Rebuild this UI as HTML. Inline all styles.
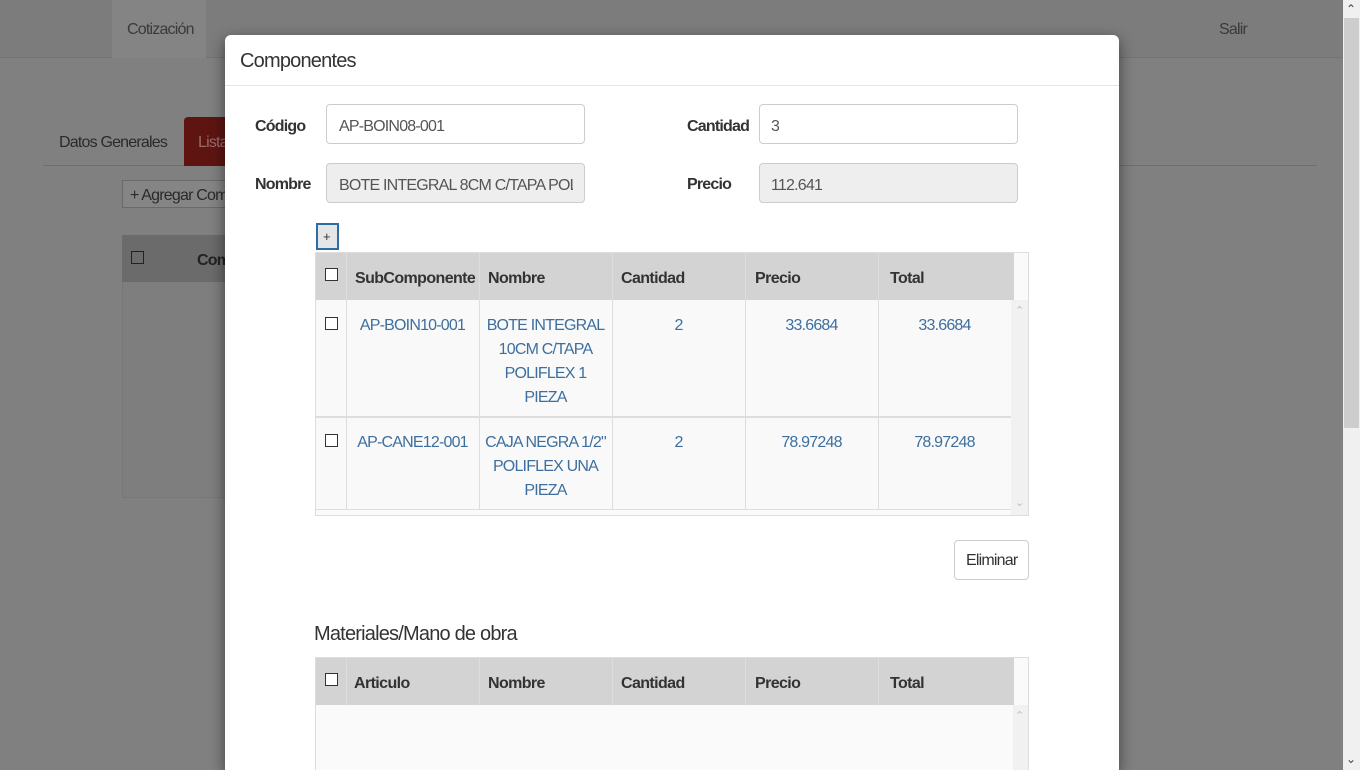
<!DOCTYPE html>
<html style="overflow:hidden;height:770px"><head><meta charset="utf-8"><style>
*{box-sizing:border-box;margin:0;padding:0}
html,body{overflow:hidden}
body{width:1360px;height:770px;background:#808080;font-family:"Liberation Sans",sans-serif;position:relative;color:#333}
.a{position:absolute}
.t{position:absolute;white-space:nowrap;letter-spacing:-0.8px;margin-top:2px}
.b{font-weight:bold}
.cb{position:absolute;width:13px;height:13px;border:1px solid #333;background:#fff}
.lnk{color:#3d6f9e;font-size:16px;letter-spacing:-0.8px;text-align:center;line-height:24px;position:absolute;margin-top:2px}
.th{position:absolute;font-weight:bold;font-size:16px;color:#333;letter-spacing:-0.6px;margin-top:2px}
.vl{position:absolute;width:1px;background:#ddd}
</style></head><body>
<!-- navbar -->
<div class="a" style="left:0;top:0;width:1343px;height:58px;background:#7c7c7c;border-bottom:1px solid #747474"></div>
<div class="a" style="left:112px;top:0;width:94px;height:58px;background:#848484"></div>
<div class="t" style="left:127px;top:19px;font-size:16px;color:#3a3a3a">Cotización</div>
<div class="t" style="left:1219px;top:19px;font-size:16px;color:#3a3a3a">Salir</div>
<!-- background page -->
<div class="a" style="left:43px;top:165px;width:1274px;height:1px;background:#6e6e6e"></div>
<div class="t" style="left:59px;top:132px;font-size:16px;color:#2a2a2a">Datos Generales</div>
<div class="a" style="left:184px;top:117px;width:45px;height:49px;background:#5e1512;border-radius:4px 4px 0 0"></div>
<div class="t" style="left:198px;top:132px;font-size:16px;color:#9b6a68">Lista</div>
<div class="a" style="left:122px;top:180px;width:110px;height:28px;background:#858585;border:1px solid #6a6a6a"></div>
<div class="t" style="left:130px;top:185px;font-size:16px;color:#2a2a2a">+ Agregar Com</div>
<div class="a" style="left:122px;top:235px;width:110px;height:263px;border:1px solid #777;background:#7e7e7e"></div>
<div class="a" style="left:122px;top:235px;width:110px;height:47px;background:#6b6b6b"></div>
<div class="a" style="left:131px;top:251px;width:13px;height:13px;border:1px solid #222"></div>
<div class="t b" style="left:197px;top:250px;font-size:16px;color:#222">Com</div>
<!-- page scrollbar -->
<div class="a" style="left:1343px;top:0;width:17px;height:770px;background:#f0f0f0"></div>
<div class="a" style="left:1344px;top:18px;width:15px;height:410px;background:#cdcdcd"></div>
<div class="t" style="left:1346px;top:0px;font-size:12px;color:#444">&#8963;</div>
<div class="t" style="left:1346px;top:750px;font-size:12px;color:#444">&#8964;</div>
<!-- modal -->
<div class="a" style="left:225px;top:35px;width:894px;height:735px;background:#fff;border-radius:6px 6px 0 0;box-shadow:0 5px 15px rgba(0,0,0,.5)"></div>
<div class="a" style="left:225px;top:85px;width:894px;height:1px;background:#e5e5e5"></div>
<div class="t" style="left:240px;top:48px;font-size:20px;color:#333;letter-spacing:-0.8px">Componentes</div>
<div class="t b" style="left:255px;top:116px;font-size:16px">Código</div>
<div class="a" style="left:326px;top:104px;width:259px;height:40px;border:1px solid #ccc;border-radius:4px"></div>
<div class="t" style="left:339px;top:116px;font-size:16px;color:#555">AP-BOIN08-001</div>
<div class="t b" style="left:255px;top:174px;font-size:16px">Nombre</div>
<div class="a" style="left:326px;top:163px;width:259px;height:40px;border:1px solid #ccc;border-radius:4px;background:#eee"></div>
<div class="t" style="left:339px;top:175px;font-size:16px;color:#555;width:234px;overflow:hidden">BOTE INTEGRAL 8CM C/TAPA POLIFLEX</div>
<div class="t b" style="left:687px;top:116px;font-size:16px">Cantidad</div>
<div class="a" style="left:759px;top:104px;width:259px;height:40px;border:1px solid #ccc;border-radius:4px"></div>
<div class="t" style="left:771px;top:116px;font-size:16px;color:#555">3</div>
<div class="t b" style="left:687px;top:174px;font-size:16px">Precio</div>
<div class="a" style="left:759px;top:163px;width:259px;height:40px;border:1px solid #ccc;border-radius:4px;background:#eee"></div>
<div class="t" style="left:771px;top:175px;font-size:16px;color:#555">112.641</div>
<!-- + button -->
<div class="a" style="left:316px;top:223px;width:23px;height:27px;border:2px solid #2e6da4;background:#e6e6e6"></div>
<div class="t" style="left:323px;top:227px;font-size:13px;color:#333">+</div>
<!-- table 1 -->
<div class="a" style="left:315px;top:252px;width:714px;height:264px;border:1px solid #ddd;background:#fafafa"></div>
<div class="a" style="left:316px;top:253px;width:698px;height:47px;background:#d3d3d3"></div>
<div class="a" style="left:1011px;top:300px;width:17px;height:215px;background:#f1f1f1"></div>
<div class="t" style="left:1015px;top:302px;font-size:11px;color:#bbb">&#8963;</div>
<div class="t" style="left:1015px;top:494px;font-size:11px;color:#bbb">&#8964;</div>
<div class="a" style="left:316px;top:300px;width:695px;height:210px;background:#f9f9f9"></div>
<div class="a" style="left:316px;top:416px;width:695px;height:2px;background:#ddd"></div>
<div class="a" style="left:316px;top:509px;width:695px;height:1px;background:#ddd"></div>
<div class="vl" style="left:346px;top:253px;height:257px"></div>
<div class="vl" style="left:479px;top:253px;height:257px"></div>
<div class="vl" style="left:612px;top:253px;height:257px"></div>
<div class="vl" style="left:745px;top:253px;height:257px"></div>
<div class="vl" style="left:878px;top:253px;height:257px"></div>
<div class="cb" style="left:325px;top:268px"></div>
<div class="th" style="left:355px;top:268px">SubComponente</div>
<div class="th" style="left:488px;top:268px">Nombre</div>
<div class="th" style="left:621px;top:268px">Cantidad</div>
<div class="th" style="left:755px;top:268px">Precio</div>
<div class="th" style="left:890px;top:268px">Total</div>
<div class="cb" style="left:325px;top:317px"></div>
<div class="lnk" style="left:346px;top:312px;width:133px">AP-BOIN10-001</div>
<div class="lnk" style="left:479px;top:312px;width:133px">BOTE INTEGRAL<br>10CM C/TAPA<br>POLIFLEX 1<br>PIEZA</div>
<div class="lnk" style="left:612px;top:312px;width:133px">2</div>
<div class="lnk" style="left:745px;top:312px;width:133px">33.6684</div>
<div class="lnk" style="left:878px;top:312px;width:133px">33.6684</div>
<div class="cb" style="left:325px;top:434px"></div>
<div class="lnk" style="left:346px;top:429px;width:133px">AP-CANE12-001</div>
<div class="lnk" style="left:479px;top:429px;width:133px">CAJA NEGRA 1/2"<br>POLIFLEX UNA<br>PIEZA</div>
<div class="lnk" style="left:612px;top:429px;width:133px">2</div>
<div class="lnk" style="left:745px;top:429px;width:133px">78.97248</div>
<div class="lnk" style="left:878px;top:429px;width:133px">78.97248</div>
<!-- Eliminar -->
<div class="a" style="left:954px;top:540px;width:75px;height:40px;border:1px solid #ccc;border-radius:4px;background:#fff"></div>
<div class="t" style="left:966px;top:550px;font-size:16px;color:#333">Eliminar</div>
<!-- materiales -->
<div class="t" style="left:314px;top:621px;font-size:20px;color:#333">Materiales/Mano de obra</div>
<div class="a" style="left:315px;top:657px;width:714px;height:120px;border:1px solid #ddd;background:#fafafa"></div>
<div class="a" style="left:316px;top:658px;width:698px;height:47px;background:#d3d3d3"></div>
<div class="a" style="left:1013px;top:705px;width:15px;height:70px;background:#f1f1f1"></div>
<div class="t" style="left:1015px;top:707px;font-size:11px;color:#bbb">&#8963;</div>
<div class="vl" style="left:346px;top:658px;height:47px"></div>
<div class="vl" style="left:479px;top:658px;height:47px"></div>
<div class="vl" style="left:612px;top:658px;height:47px"></div>
<div class="vl" style="left:745px;top:658px;height:47px"></div>
<div class="vl" style="left:878px;top:658px;height:47px"></div>
<div class="cb" style="left:325px;top:673px"></div>
<div class="th" style="left:354px;top:673px">Articulo</div>
<div class="th" style="left:488px;top:673px">Nombre</div>
<div class="th" style="left:621px;top:673px">Cantidad</div>
<div class="th" style="left:755px;top:673px">Precio</div>
<div class="th" style="left:890px;top:673px">Total</div>
</body></html>
